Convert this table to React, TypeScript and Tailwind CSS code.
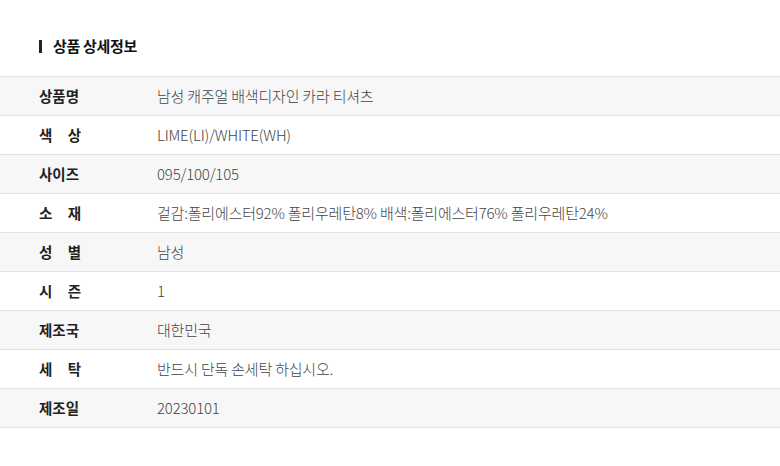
import React from 'react'

const rows: { label: string; value: string }[] = [
  { label: '상품명', value: '남성 캐주얼 배색디자인 카라 티셔츠' },
  { label: '색상', value: 'LIME(LI)/WHITE(WH)' },
  { label: '사이즈', value: '095/100/105' },
  { label: '소재', value: '겉감:폴리에스터92% 폴리우레탄8% 배색:폴리에스터76% 폴리우레탄24%' },
  { label: '성별', value: '남성' },
  { label: '시즌', value: '1' },
  { label: '제조국', value: '대한민국' },
  { label: '세탁', value: '반드시 단독 손세탁 하십시오.' },
  { label: '제조일', value: '20230101' },
]

function Label({ text }: { text: string }) {
  // two-letter labels are spread to the width of three letters
  if (text.length === 2) {
    return (
      <span className="flex w-[42px] justify-between">
        <span>{text[0]}</span>
        <span>{text[1]}</span>
      </span>
    )
  }
  return <span>{text}</span>
}

export default function App() {
  return (
    <div
      className="h-[466px] w-[780px] bg-white"
      style={{ fontFamily: '"Noto Sans CJK KR", "Noto Sans", sans-serif' }}
    >
      <div className="flex h-[76px] items-center pl-[39px] pt-[17px]">
        <span className="mr-[11px] h-[13px] w-[3px] bg-[#222]" />
        <h2 className="text-[15px] font-bold tracking-[-0.3px] text-[#111]">상품 상세정보</h2>
      </div>

      <div className="border-t border-[#e2e2e2]">
        {rows.map((r, i) => (
          <div
            key={r.label}
            className={
              'flex h-[39px] items-center border-b border-[#e2e2e2] ' +
              (i % 2 === 0 ? 'bg-[#f7f7f7]' : 'bg-white')
            }
          >
            <div className="w-[157px] pl-[39px] text-[14.5px] font-bold text-[#222]">
              <Label text={r.label} />
            </div>
            <div className="text-[15px] font-light tracking-[-0.2px] text-[#444]">{r.value}</div>
          </div>
        ))}
      </div>
    </div>
  )
}
